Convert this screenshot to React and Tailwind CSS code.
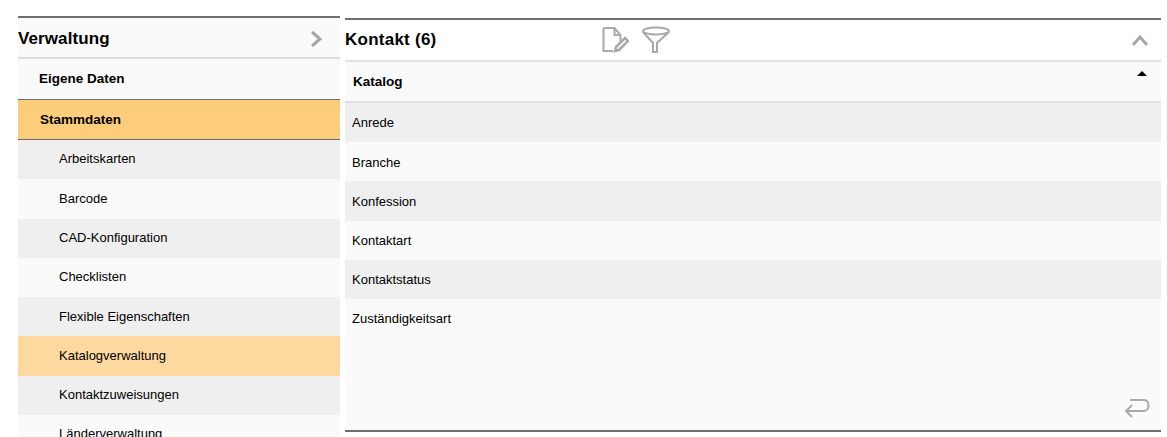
const menuItems = [
  { label: 'Arbeitskarten', bg: 'bg-[#efefef]' },
  { label: 'Barcode', bg: 'bg-[#fafafa]' },
  { label: 'CAD-Konfiguration', bg: 'bg-[#efefef]' },
  { label: 'Checklisten', bg: 'bg-[#fafafa]' },
  { label: 'Flexible Eigenschaften', bg: 'bg-[#efefef]' },
  { label: 'Katalogverwaltung', bg: 'bg-[#fdd9a0]' },
  { label: 'Kontaktzuweisungen', bg: 'bg-[#efefef]' },
  { label: 'Länderverwaltung', bg: 'bg-[#fafafa]' },
];

const rows = ['Anrede', 'Branche', 'Konfession', 'Kontaktart', 'Kontaktstatus', 'Zuständigkeitsart'];

function NoteIcon() {
  return (
    <svg width="27" height="28" viewBox="0 0 27 28" fill="none" stroke="#a9a9a9" strokeWidth="2">
      <path d="M1.5 2h11l6 7v6M12.5 2v7h6M1.5 2v23h9.5" />
      <path d="M13 25l1-4 9-9 3 3-9 9z" strokeWidth="2.5" />
    </svg>
  );
}

function FunnelIcon() {
  return (
    <svg width="30" height="28" viewBox="0 0 30 28" fill="none" stroke="#a9a9a9" strokeWidth="2">
      <ellipse cx="15" cy="5" rx="13" ry="3.5" />
      <path d="M2 6l10 11v9h4V17L28 6" />
    </svg>
  );
}

export default function App() {
  return (
    <div className="h-[437px] w-[1167px] overflow-hidden bg-white font-['Liberation_Sans',sans-serif] text-black">
      <div className="flex items-start pl-[18px]">
        <div className="mt-4 h-[421px] w-[322px] overflow-hidden border-t-2 border-[#6e6e6e] bg-[#fafafa]">
          <div className="flex h-[41px] items-center justify-between border-b-[2px] border-[#dcdcdc] pt-[2px] pr-4">
            <span className="text-[17px] font-bold tracking-[0.1px]">Verwaltung</span>
            <svg width="14" height="18" viewBox="0 0 14 18" fill="none" stroke="#a6a6a6" strokeWidth="3">
              <path d="M2 2l8 7-8 7" />
            </svg>
          </div>
          <div className="flex h-[40px] items-center pl-[21px] text-[13.5px] font-bold">Eigene Daten</div>
          <div className="flex h-[41px] items-center border-y border-[#6e6e6e] bg-[#fdcd7c] pt-[1px] pl-[22px] text-[13.5px] font-bold">
            Stammdaten
          </div>
          {menuItems.map((item) => (
            <div key={item.label} className={`flex h-[39.3px] items-center pb-[1px] pl-[41px] text-[13px] ${item.bg}`}>
              {item.label}
            </div>
          ))}
        </div>

        <div className="mt-[18px] ml-[5px] h-[414px] w-[816px] border-y-2 border-[#6e6e6e] bg-[#fafafa]">
          <div className="flex h-[40px] items-center bg-white pr-[12px]">
            <span className="w-[257px] text-[17px] font-bold tracking-[0.25px]">Kontakt (6)</span>
            <div className="flex items-center gap-[12px]">
              <NoteIcon />
              <FunnelIcon />
            </div>
            <svg className="ml-auto" width="18" height="14" viewBox="0 0 18 14" fill="none" stroke="#a6a6a6" strokeWidth="3">
              <path d="M2 12l7-8 7 8" />
            </svg>
          </div>
          <div className="relative flex h-[43px] items-center border-y-2 border-[#e2e2e2] pt-[1px] pl-2 text-[13.5px] font-bold">
            Katalog
            <span className="absolute top-[9px] right-[14px] h-0 w-0 border-x-[5px] border-b-[5px] border-x-transparent border-b-black" />
          </div>
          {rows.map((row, i) => (
            <div
              key={row}
              className={`flex h-[39.2px] items-center pt-[1px] pl-[7px] text-[13px] ${i % 2 === 0 ? 'bg-[#efefef]' : 'bg-[#fafafa]'}`}
            >
              {row}
            </div>
          ))}
          <div className="flex h-[90px] items-end justify-end pr-[11px] pb-[8px]">
            <svg width="26" height="22" viewBox="0 0 26 22" fill="none" stroke="#a9a9a9" strokeWidth="2">
              <path d="M6 2h14c6 0 6 11 0 11H2M8 7l-6 6 6 6" />
            </svg>
          </div>
        </div>
      </div>
    </div>
  );
}
